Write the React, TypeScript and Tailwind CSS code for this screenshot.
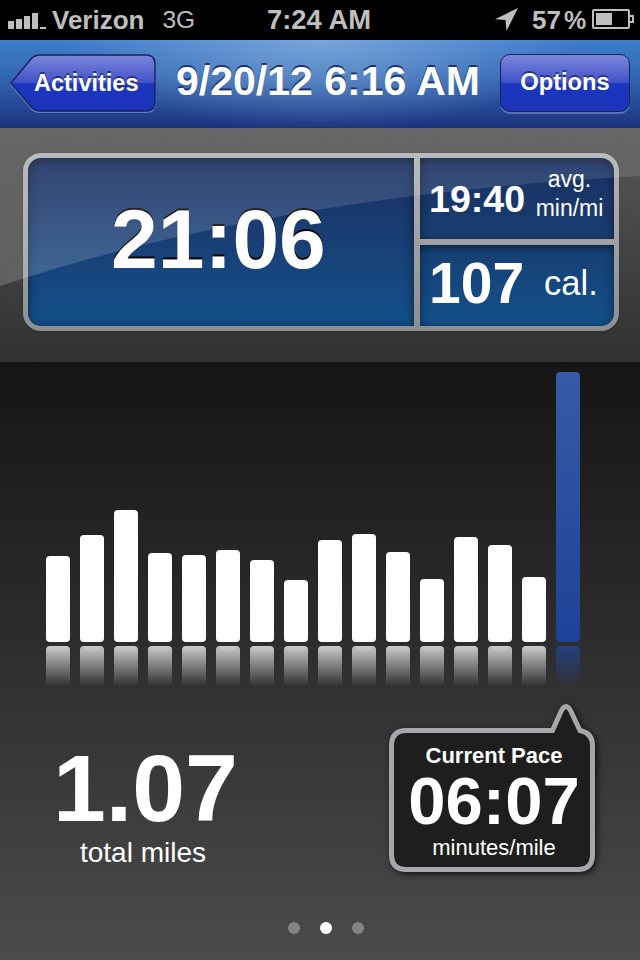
import { ReactNode } from "react";

const BASELINE = 642;

const barTops = [
  556, 534.5, 509.5, 552.6, 555.4, 550, 559.6, 580, 540.4, 533.6, 552, 579.4,
  537, 545, 577.4, 372,
];

const StatusBar = () => {
  return (
    <div className="h-10 bg-black text-[#bfbfbf] grid grid-cols-3 leading-10">
      <div className="flex pl-2">
        <svg width="38" height="40" fill="#bfbfbf" className="mr-[6px]">
          <rect x="0" y="21" width="6" height="8" />
          <rect x="8" y="19" width="6" height="10" />
          <rect x="16" y="16" width="6" height="13" />
          <rect x="24" y="13" width="6" height="16" />
          <rect x="32" y="27" width="6" height="2" />
        </svg>
        <p className="text-[26px] font-bold">Verizon</p>
        <p className="text-[24.5px] ml-[18px]">3G</p>
      </div>
      <p className="text-center text-[27.4px] font-bold -ml-[2px]">7:24 AM</p>
      <div className="flex justify-end pr-[6px]">
        <svg width="24" height="40" fill="#bfbfbf" className="mr-[13px]">
          <path d="M23 8 L11.5 31 L10.5 20 L0 19.2 Z" />
        </svg>
        <p className="text-[26px] font-bold">57</p>
        <p className="text-[25px] font-bold ml-[3px] w-[23px]">%</p>
        <svg width="42" height="40" className="ml-[5px]" fill="none">
          <rect x="1" y="10" width="36" height="18" rx="1" stroke="#bfbfbf" strokeWidth="2" />
          <rect x="4" y="13" width="16" height="12" fill="#bfbfbf" />
          <path d="M38 16 H41 V22 H38" stroke="#bfbfbf" strokeWidth="2" />
        </svg>
      </div>
    </div>
  );
};

const NavBar = () => {
  return (
    <div className="h-22 flex items-start bg-[radial-gradient(ellipse_260px_90px_at_50%_0%,rgba(150,185,228,0.65),rgba(150,185,228,0)),linear-gradient(#3f7ecb,#3165b0_45%,#1e3480)] border-b border-[#1c3078]">
      <button className="relative w-[146px] h-[60px] ml-[10px] mt-[14px]">
        <svg width="148" height="62" className="absolute left-0 top-0">
          <defs>
            <linearGradient id="back" x1="0" y1="0" x2="0" y2="1">
              <stop offset="0" stopColor="#7d88dc" />
              <stop offset="0.5" stopColor="#3f50c6" />
              <stop offset="0.51" stopColor="#1a37c0" />
              <stop offset="1" stopColor="#1c32b8" />
            </linearGradient>
          </defs>
          <path
            d="M1 30 L21 6 Q25 2 30 2 H136 Q145 2 145 11 V49 Q145 58 136 58 H30 Q25 58 21 54 Z"
            fill="none"
            stroke="#8fa6d8"
            strokeOpacity="0.6"
            strokeWidth="2"
          />
          <path
            d="M1 29 L21 5 Q25 1 30 1 H136 Q145 1 145 10 V48 Q145 57 136 57 H30 Q25 57 21 53 Z"
            fill="url(#back)"
            stroke="#182258"
            strokeWidth="1.5"
          />
        </svg>
        <span className="absolute left-6 top-0 leading-[58px] text-[23.5px] font-bold text-white [text-shadow:0_-2px_0_#26347c]">
          Activities
        </span>
      </button>
      <h1 className="flex-1 text-center text-[41px] leading-[82px] font-bold text-white whitespace-nowrap [text-shadow:0_-2px_0_#1d3561]">
        9/20/12 6:16 AM
      </h1>
      <button className="w-[130px] h-[58px] mr-[10px] mt-[14px] rounded-[10px] border-[1.5px] border-[#182258] bg-[linear-gradient(#7d88dc,#3f50c6_50%,#1a37c0_51%,#1c32b8)] shadow-[0_2px_0_0_rgba(143,166,216,0.5)] leading-[54px] pb-[2px] text-[23.7px] font-bold text-white [text-shadow:0_-2px_0_#26347c]">
        Options
      </button>
    </div>
  );
};

const Summary = () => {
  return (
    <div className="relative h-[234px] pt-[25px] pl-[23px] bg-linear-to-b from-[#565656] to-[#2c2c2c]">
      <svg className="absolute inset-0" width="640" height="234">
        <filter id="grain">
          <feTurbulence type="fractalNoise" baseFrequency="0.7" numOctaves="2" />
          <feColorMatrix type="saturate" values="0.2" />
        </filter>
        <rect width="640" height="234" filter="url(#grain)" opacity="0.07" />
      </svg>
      <div className="relative w-[596px] h-[178px] p-[5px] rounded-[18px] bg-linear-to-b from-[#b2b3b6] to-[#8d8e91] grid grid-cols-[386px_194px] grid-rows-[81px_81px] gap-[6px] shadow-[0_0_2px_rgba(0,0,0,0.4)] text-white">
        <div className="row-span-2 rounded-l-[13px] bg-linear-to-b from-[#1a2f62] to-[#12508a] shadow-[inset_0_2px_10px_rgba(0,0,0,0.55)] pl-[83px]">
          <p className="text-[84px] leading-[162px] font-bold [text-shadow:0_-2px_0_#000]">
            21:06
          </p>
        </div>
        <div className="rounded-tr-[13px] bg-linear-to-b from-[#1a2f62] to-[#183e70] shadow-[inset_0_2px_8px_rgba(0,0,0,0.5)] flex pl-[9px]">
          <p className="text-[37.6px] leading-[82px] font-bold w-[99px]">19:40</p>
          <p className="text-[23px] leading-[29px] pt-[7px] w-[83px] text-center">
            avg.
            <br />
            min/mi
          </p>
        </div>
        <div className="rounded-br-[13px] bg-linear-to-b from-[#163f72] to-[#12508a] shadow-[inset_0_2px_8px_rgba(0,0,0,0.5)] flex pl-[9px]">
          <p className="text-[57px] leading-[77px] font-bold">107</p>
          <p className="text-[34.5px] leading-[77px] ml-[20px]">cal.</p>
        </div>
      </div>
      {/* gloss */}
      <svg className="absolute inset-0" width="640" height="234">
        <defs>
          <linearGradient id="gloss" x1="0" y1="0" x2="0" y2="1">
            <stop offset="0" stopColor="#fff" stopOpacity="0.08" />
            <stop offset="1" stopColor="#fff" stopOpacity="0.18" />
          </linearGradient>
        </defs>
        <path d="M0 0 H640 V48 Q270 68 0 158 Z" fill="url(#gloss)" />
      </svg>
    </div>
  );
};

const Chart = () => {
  return (
    <div className="h-[324px] pl-[46px] flex items-end gap-[10px]">
      {barTops.map((top, i) => {
        const current = i === barTops.length - 1;
        return (
          <div key={i} className="w-6">
            <div
              style={{ height: `${BASELINE - top}px` }}
              className={
                current
                  ? "rounded-[4px] bg-linear-to-b from-[#3859a5] to-[#1e4298]"
                  : "rounded-[4px] bg-white"
              }
            ></div>
            <div
              className={
                current
                  ? "h-10 mt-1 rounded-t-[4px] bg-linear-to-b from-[#264180] to-[#264180]/0"
                  : "h-10 mt-1 rounded-t-[4px] bg-linear-to-b from-white/75 to-white/0"
              }
            ></div>
          </div>
        );
      })}
    </div>
  );
};

const Callout = ({ children }: { children: ReactNode }) => {
  return (
    <div className="relative w-[206px] h-[168px] pt-[24px] text-white text-center">
      <svg
        width="206"
        height="168"
        className="absolute inset-0 overflow-visible drop-shadow-[2px_2px_3px_rgba(0,0,0,0.7)]"
      >
        <path
          d="M17.5 26.5 H163.5 L172 7.5 Q177 -2.5 182 7.5 L191 26.5 Q203.5 29 203.5 41.5 V150.5 Q203.5 165.5 188.5 165.5 H17.5 Q2.5 165.5 2.5 150.5 V41.5 Q2.5 26.5 17.5 26.5 Z"
          fill="#1e1e1e"
          stroke="#a6a7ab"
          strokeWidth="5"
        />
      </svg>
      <div className="relative pl-[4px]">{children}</div>
    </div>
  );
};

const App = () => {
  return (
    <div className="w-[640px] h-[960px] overflow-hidden bg-black font-['Liberation_Sans',Arial,sans-serif]">
      <StatusBar />
      <NavBar />
      <Summary />
      <div className="h-[598px] bg-linear-to-b from-[#151515] to-[#4b4b4b]">
        <Chart />
        <div className="flex justify-between pt-[18px] pl-[50px] pr-[45px] h-[236px]">
          <div className="text-white text-center w-[186px] pt-[36px]">
            <p className="text-[95px] leading-[97px] font-bold pl-[3px]">1.07</p>
            <p className="text-[28px] leading-[32px]">total miles</p>
          </div>
          <Callout>
            <p className="text-[22px] leading-[26px] pt-[15px] font-bold">Current Pace</p>
            <p className="text-[67px] leading-[64px] font-bold">06:07</p>
            <p className="text-[22px] leading-[26px] pt-[2px]">minutes/mile</p>
          </Callout>
        </div>
        <div className="flex justify-center gap-5 pl-3">
          <div className="size-3 rounded-full bg-[#848484]"></div>
          <div className="size-3 rounded-full bg-white"></div>
          <div className="size-3 rounded-full bg-[#848484]"></div>
        </div>
      </div>
    </div>
  );
};

export default App;
